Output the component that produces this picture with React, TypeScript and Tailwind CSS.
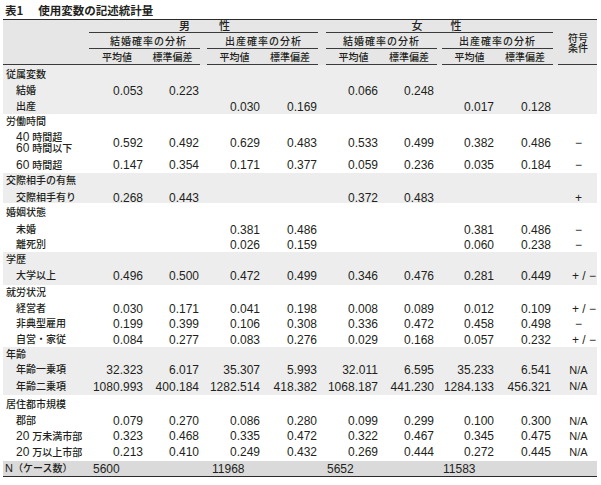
import React from "react";

const GRID =
  "grid grid-cols-[86px_56px_55px_7px_55px_56px_8px_55px_56px_5px_55px_56px_5px_39px]";
const PR = ["pr-[2px]", "pr-[1px]", "pr-[2px]", "pr-[1px]", "pr-[3px]", "pr-[3px]", "pr-[3px]", "pr-[2px]"];
const E = ["", "", "", "", "", "", "", ""];

type Row = {
  label: React.ReactNode;
  v?: string[];
  s?: string;
  h: string;
  head?: boolean;
};

type Section = { bg: string; cls: string; rows: Row[] };

const D = (t: string) => <span className="text-[12px]">{t}</span>;

const sections: Section[] = [
  {
    bg: "bg-[#ededed]",
    cls: "pt-[2px]",
    rows: [
      { label: "従属変数", h: "h-[16px]", head: true },
      { label: "結婚", v: ["0.053", "0.223", "", "", "0.066", "0.248", "", ""], h: "h-[16px]" },
      { label: "出産", v: ["", "", "0.030", "0.169", "", "", "0.017", "0.128"], h: "h-[15px]" },
    ],
  },
  {
    bg: "bg-white",
    cls: "pb-[2px]",
    rows: [
      { label: "労働時間", h: "h-[16px]", head: true },
      {
        label: (
          <div className="flex flex-col leading-[11px]">
            <span>
              {D("40")} 時間超
            </span>
            <span>
              {D("60")} 時間以下
            </span>
          </div>
        ),
        v: ["0.592", "0.492", "0.629", "0.483", "0.533", "0.499", "0.382", "0.486"],
        s: "−",
        h: "h-[26px]",
      },
      {
        label: (
          <span>
            {D("60")} 時間超
          </span>
        ),
        v: ["0.147", "0.354", "0.171", "0.377", "0.059", "0.236", "0.035", "0.184"],
        s: "−",
        h: "h-[15px]",
      },
    ],
  },
  {
    bg: "bg-[#ededed]",
    cls: "",
    rows: [
      { label: "交際相手の有無", h: "h-[16px]", head: true },
      { label: "交際相手有り", v: ["0.268", "0.443", "", "", "0.372", "0.483", "", ""], s: "+", h: "h-[14px]" },
    ],
  },
  {
    bg: "bg-white",
    cls: "pt-[2px]",
    rows: [
      { label: "婚姻状態", h: "h-[16px]", head: true },
      { label: "未婚", v: ["", "", "0.381", "0.486", "", "", "0.381", "0.486"], s: "−", h: "h-[15px]" },
      { label: "離死別", v: ["", "", "0.026", "0.159", "", "", "0.060", "0.238"], s: "−", h: "h-[16px]" },
    ],
  },
  {
    bg: "bg-[#ededed]",
    cls: "pb-[1px]",
    rows: [
      { label: "学歴", h: "h-[15px]", head: true },
      { label: "大学以上", v: ["0.496", "0.500", "0.472", "0.499", "0.346", "0.476", "0.281", "0.449"], s: "+ / −", h: "h-[17px]" },
    ],
  },
  {
    bg: "bg-white",
    cls: "",
    rows: [
      { label: "就労状況", h: "h-[15px]", head: true },
      { label: "経営者", v: ["0.030", "0.171", "0.041", "0.198", "0.008", "0.089", "0.012", "0.109"], s: "+ / −", h: "h-[15px]" },
      { label: "非典型雇用", v: ["0.199", "0.399", "0.106", "0.308", "0.336", "0.472", "0.458", "0.498"], s: "−", h: "h-[16px]" },
      { label: "自営・家従", v: ["0.084", "0.277", "0.083", "0.276", "0.029", "0.168", "0.057", "0.232"], s: "+ / −", h: "h-[16px]" },
    ],
  },
  {
    bg: "bg-[#ededed]",
    cls: "",
    rows: [
      { label: "年齢", h: "h-[15px]", head: true },
      { label: "年齢一乗項", v: ["32.323", "6.017", "35.307", "5.993", "32.011", "6.595", "35.233", "6.541"], s: "N/A", h: "h-[16px]" },
      { label: "年齢二乗項", v: ["1080.993", "400.184", "1282.514", "418.382", "1068.187", "441.230", "1284.133", "456.321"], s: "N/A", h: "h-[17px]" },
    ],
  },
  {
    bg: "bg-white",
    cls: "pt-[2px] pb-[1px]",
    rows: [
      { label: "居住都市規模", h: "h-[16px]", head: true },
      { label: "郡部", v: ["0.079", "0.270", "0.086", "0.280", "0.099", "0.299", "0.100", "0.300"], s: "N/A", h: "h-[15px]" },
      {
        label: (
          <span>
            {D("20")} 万未満市部
          </span>
        ),
        v: ["0.323", "0.468", "0.335", "0.472", "0.322", "0.467", "0.345", "0.475"],
        s: "N/A",
        h: "h-[16px]",
      },
      {
        label: (
          <span>
            {D("20")} 万以上市部
          </span>
        ),
        v: ["0.213", "0.410", "0.249", "0.432", "0.269", "0.444", "0.272", "0.445"],
        s: "N/A",
        h: "h-[16px]",
      },
    ],
  },
];

function Sign({ s }: { s?: string }) {
  if (!s) return <div />;
  if (s === "+ / −")
    return <div className="text-left pl-[14px] text-[12px] whitespace-nowrap">{s}</div>;
  if (s === "N/A") return <div className="text-center pl-[2px] text-[11px] whitespace-nowrap">{s}</div>;
  return <div className="text-center pl-[2px] text-[12px]">{s}</div>;
}

function DataRow({ r }: { r: Row }) {
  if (r.head) {
    return (
      <div className={`${r.h} flex items-center pl-[3px] text-[10px] leading-[12px]`}>{r.label}</div>
    );
  }
  const v = r.v ?? E;
  const cells: React.ReactNode[] = [];
  cells.push(
    <div key="l" className="pl-[13px] text-[10px] leading-[12px] whitespace-nowrap">
      {r.label}
    </div>
  );
  v.forEach((x, i) => {
    cells.push(
      <div key={"v" + i} className={`text-right text-[12px] leading-[12px] ${PR[i]}`}>
        {x}
      </div>
    );
    if (i % 2 === 1) cells.push(<div key={"g" + i} />);
  });
  cells.pop();
  cells.push(<div key="gap-last" />);
  cells.push(<Sign key="s" s={r.s} />);
  return <div className={`${GRID} ${r.h} items-center`}>{cells}</div>;
}

export default function App() {
  const line = "border-b border-[#3a3a3a]";
  return (
    <div className="w-[601px] h-[485px] bg-white text-[#231f20] font-['Liberation_Sans','Noto_Sans_CJK_JP',sans-serif] font-medium">
      <div className="ml-[3px] w-[594px]">
        <div className="h-[19px] pt-[4px] pl-[2px] leading-[13px] text-[11.5px] font-bold flex font-['Noto_Sans_CJK_JP',sans-serif]">
          <span>表1</span>
          <span className="ml-[15px]">使用変数の記述統計量</span>
        </div>

        <div className={`${GRID} grid-rows-[13px_16px_16px] border-t-[1.5px] border-t-[#2a2a2a] bg-[#e6e6e6]`}>
          <div className={`col-start-1 row-start-1 row-span-3 ${line}`} />
          <div className={`col-start-2 col-span-5 row-start-1 ${line} flex items-end justify-center gap-[29px] text-[11px] leading-[11px] pl-[2px]`}>
            <span>男</span>
            <span>性</span>
          </div>
          <div className={`col-start-8 col-span-5 row-start-1 ${line} flex items-end justify-center gap-[28px] text-[11px] leading-[11px] pr-[6px]`}>
            <span>女</span>
            <span>性</span>
          </div>
          <div className={`col-start-14 row-start-1 row-span-3 ${line} flex flex-col items-center justify-center pt-[3px] pl-[1px] text-[10px] leading-[10px]`}>
            <span>符号</span>
            <span>条件</span>
          </div>

          <div className={`col-start-2 col-span-2 row-start-2 ${line} flex items-end justify-center text-[10px] leading-[10px] tracking-[1px] pb-[1px] pl-[8px]`}>
            結婚確率の分析
          </div>
          <div className={`col-start-5 col-span-2 row-start-2 ${line} flex items-end justify-center text-[10px] leading-[10px] tracking-[1px] pb-[1px] pl-[2px]`}>
            出産確率の分析
          </div>
          <div className={`col-start-8 col-span-2 row-start-2 ${line} flex items-end justify-center text-[10px] leading-[10px] tracking-[1px] pb-[1px]`}>
            結婚確率の分析
          </div>
          <div className={`col-start-11 col-span-2 row-start-2 ${line} flex items-end justify-center text-[10px] leading-[10px] tracking-[1px] pb-[1px]`}>
            出産確率の分析
          </div>

          <div className={`col-start-2 row-start-3 ${line} flex items-end justify-center text-[10px] leading-[10px] pb-[1px]`}>平均値</div>
          <div className={`col-start-3 row-start-3 ${line} flex items-end justify-center text-[10px] leading-[10px] pb-[1px]`}>標準偏差</div>
          <div className={`col-start-5 row-start-3 ${line} flex items-end justify-center text-[10px] leading-[10px] pb-[1px]`}>平均値</div>
          <div className={`col-start-6 row-start-3 ${line} flex items-end justify-center text-[10px] leading-[10px] pb-[1px]`}>標準偏差</div>
          <div className={`col-start-8 row-start-3 ${line} flex items-end justify-center text-[10px] leading-[10px] pb-[1px]`}>平均値</div>
          <div className={`col-start-9 row-start-3 ${line} flex items-end justify-center text-[10px] leading-[10px] pb-[1px]`}>標準偏差</div>
          <div className={`col-start-11 row-start-3 ${line} flex items-end justify-center text-[10px] leading-[10px] pb-[1px]`}>平均値</div>
          <div className={`col-start-12 row-start-3 ${line} flex items-end justify-center text-[10px] leading-[10px] pb-[1px]`}>標準偏差</div>
        </div>

        {sections.map((sec, si) => (
          <div key={si} className={`${sec.bg} ${sec.cls}`}>
            {sec.rows.map((r, ri) => (
              <DataRow key={ri} r={r} />
            ))}
          </div>
        ))}

        <div className={`${GRID} h-[16px] items-center bg-[#dadada] border-b-[1.5px] border-b-[#2a2a2a]`}>
          <div className="pl-[2px] text-[10px] leading-[12px] whitespace-nowrap">
            <span className="text-[11px]">N</span>（ケース数）
          </div>
          <div className="col-span-2 pl-[4px] text-[12px] leading-[12px]">5600</div>
          <div />
          <div className="col-span-2 pl-[5px] text-[12px] leading-[12px]">11968</div>
          <div />
          <div className="col-span-2 pl-[1px] text-[12px] leading-[12px]">5652</div>
          <div />
          <div className="col-span-2 pl-[1px] text-[12px] leading-[12px]">11583</div>
          <div />
          <div />
        </div>
      </div>
    </div>
  );
}
